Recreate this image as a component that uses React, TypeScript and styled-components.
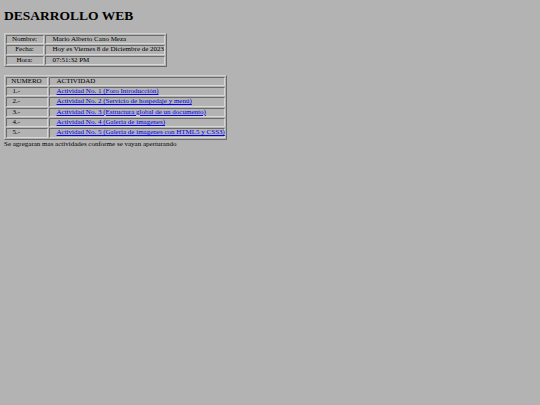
import React from "react";
import styled, { createGlobalStyle } from "styled-components";

const Global = createGlobalStyle`
  html, body { margin: 0; padding: 0; background: #b3b3b3; }
  body { font-family: "Liberation Serif", "Times New Roman", serif; color: #000; }
  #root { padding: 0 4px; }
`;

const Title = styled.h1`
  font-size: 13.5px;
  font-weight: bold;
  margin: 0;
  padding-top: 8px;
  line-height: 16px;
`;

const Table = styled.table<{ $w: number; $top: number }>`
  width: ${(p) => p.$w}px;
  table-layout: fixed;
  margin-top: ${(p) => p.$top}px;
  border-collapse: separate;
  border-spacing: 1px;
  border: 1px solid;
  border-color: #d0d0d0 #6a6a6a #6a6a6a #d0d0d0;
  font-size: 7px;
  margin-left: -0.5px;
`;

const Cell = styled.td<{ $w?: number; $pad?: number; $center?: boolean }>`
  border: 1px solid;
  border-color: #6a6a6a #d8d8d8 #d8d8d8 #6a6a6a;
  line-height: 7.3px;
  padding: 0 0 0 ${(p) => p.$pad ?? 7}px;
  width: ${(p) => (p.$w ? `${p.$w}px` : "auto")};
  text-align: ${(p) => (p.$center ? "center" : "left")};
  white-space: nowrap;
  box-sizing: border-box;
`;

const Link = styled.a`
  color: #0000ee;
  text-decoration: underline;
`;

const Note = styled.div`
  font-size: 7px;
  line-height: 9px;
  margin-top: 0px;
`;

const info = [
  ["Nombre:", "Mario Alberto Cano Meza"],
  ["Fecha:", "Hoy es Viernes 8 de Diciembre de 2023"],
  ["Hora:", "07:51:32 PM"],
];

const acts = [
  "Actividad No. 1 (Foro Introducción)",
  "Actividad No. 2 (Servicio de hospedaje y menú)",
  "Actividad No. 3 (Estructura global de un documento)",
  "Actividad No. 4 (Galeria de imagenes)",
  "Actividad No. 5 (Galeria de imagenes con HTML5 y CSS3)",
];

export default function App() {
  return (
    <>
      <Global />
      <Title>DESARROLLO WEB</Title>
      <Table $w={163} $top={9}>
        <tbody>
          {info.map(([k, v]) => (
            <tr key={k}>
              <Cell $w={38} $pad={0} $center>{k}</Cell>
              <Cell>{v}</Cell>
            </tr>
          ))}
        </tbody>
      </Table>
      <Table $w={223} $top={8}>
        <tbody>
          <tr>
            <Cell $w={42} $pad={0} $center>NUMERO</Cell>
            <Cell>ACTIVIDAD</Cell>
          </tr>
          {acts.map((a, i) => (
            <tr key={a}>
              <Cell $w={42} $pad={6}>{i + 1}.-</Cell>
              <Cell>
                <Link href="#">{a}</Link>
              </Cell>
            </tr>
          ))}
        </tbody>
      </Table>
      <Note>Se agregaran mas actividades conforme se vayan aperturando</Note>
    </>
  );
}
